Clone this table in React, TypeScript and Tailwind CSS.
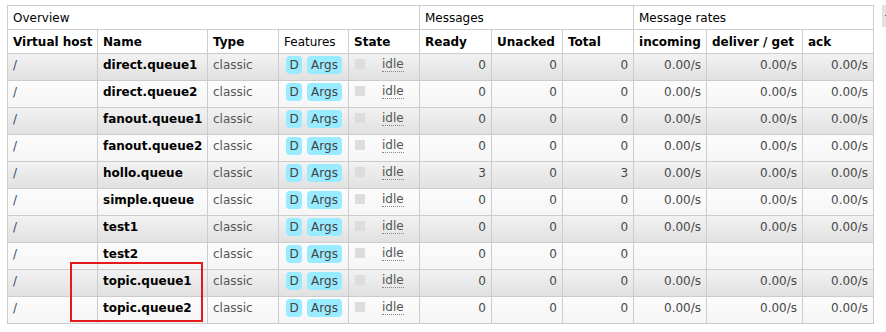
import React from 'react'

const queues = [
  { name: 'direct.queue1', ready: 0, unacked: 0, total: 0, rates: true },
  { name: 'direct.queue2', ready: 0, unacked: 0, total: 0, rates: true },
  { name: 'fanout.queue1', ready: 0, unacked: 0, total: 0, rates: true },
  { name: 'fanout.queue2', ready: 0, unacked: 0, total: 0, rates: true },
  { name: 'hollo.queue', ready: 3, unacked: 0, total: 3, rates: true },
  { name: 'simple.queue', ready: 0, unacked: 0, total: 0, rates: true },
  { name: 'test1', ready: 0, unacked: 0, total: 0, rates: true },
  { name: 'test2', ready: 0, unacked: 0, total: 0, rates: false },
  { name: 'topic.queue1', ready: 0, unacked: 0, total: 0, rates: true },
  { name: 'topic.queue2', ready: 0, unacked: 0, total: 0, rates: true },
]

const th =
  'border border-[#cccccc] px-[5px] text-left font-bold h-[24px] align-middle whitespace-nowrap overflow-hidden'
const td = 'border border-[#cccccc] px-[5px] pt-[3px] align-top h-[27px] whitespace-nowrap'
const num = `${td} text-right text-[#484848]`

function Badge({ children, w }: { children: React.ReactNode; w: string }) {
  return (
    <span
      className={`inline-flex items-center justify-center h-[18px] ${w} rounded-[4px] bg-[#99ebff] text-[#444] leading-[18px]`}
    >
      {children}
    </span>
  )
}

export default function App() {
  return (
    <div
      className="relative flex items-start pt-[5px] pl-[7px] bg-white text-[12px] leading-[16px] text-black overflow-hidden"
      style={{ fontFamily: '"DejaVu Sans", Verdana, sans-serif' }}
    >
      <table className="table-fixed border-collapse w-[866px] shrink-0">
        <colgroup>
          <col className="w-[90px]" />
          <col className="w-[110px]" />
          <col className="w-[71px]" />
          <col className="w-[70px]" />
          <col className="w-[71px]" />
          <col className="w-[72px]" />
          <col className="w-[71px]" />
          <col className="w-[71px]" />
          <col className="w-[73px]" />
          <col className="w-[96px]" />
          <col className="w-[71px]" />
        </colgroup>
        <thead>
          <tr>
            <th colSpan={5} className={`${th} font-normal`}>Overview</th>
            <th colSpan={3} className={`${th} font-normal`}>Messages</th>
            <th colSpan={3} className={`${th} font-normal`}>Message rates</th>
          </tr>
          <tr>
            <th className={th}>Virtual host</th>
            <th className={th}>Name</th>
            <th className={th}>Type</th>
            <th className={`${th} font-normal`}>Features</th>
            <th className={th}>State</th>
            <th className={th}>Ready</th>
            <th className={th}>Unacked</th>
            <th className={th}>Total</th>
            <th className={th}>incoming</th>
            <th className={th}>deliver / get</th>
            <th className={th}>ack</th>
          </tr>
        </thead>
        <tbody>
          {queues.map((q, i) => (
            <tr
              key={q.name}
              className={
                i % 2 === 0
                  ? 'bg-gradient-to-b from-[#f2f2f2] to-[#e0e0e0]'
                  : 'bg-gradient-to-b from-[#fcfcfc] to-[#f5f5f5]'
              }
            >
              <td className={`${td} text-[#3a4a6a]`}>/</td>
              <td className={`${td} font-bold`}>{q.name}</td>
              <td className={`${td} text-[#555]`}>classic</td>
              <td className="border border-[#cccccc] pl-[7px] pt-[2px] align-top h-[27px]">
                <div className="flex gap-[5px]">
                  <Badge w="w-[16px]">D</Badge>
                  <Badge w="w-[35px]">Args</Badge>
                </div>
              </td>
              <td className="border border-[#cccccc] pl-[6px] pt-[5px] align-top h-[27px]">
                <div className="flex items-start">
                  <span className="w-[10px] h-[10px] bg-[#dddddd] shrink-0" />
                  <span className="ml-[17px] -mt-[2px] text-[#555] border-b border-dotted border-[#888] leading-[14px]">
                    idle
                  </span>
                </div>
              </td>
              <td className={num}>{q.ready}</td>
              <td className={num}>{q.unacked}</td>
              <td className={num}>{q.total}</td>
              <td className={num}>{q.rates ? '0.00/s' : ''}</td>
              <td className={num}>{q.rates ? '0.00/s' : ''}</td>
              <td className={num}>{q.rates ? '0.00/s' : ''}</td>
            </tr>
          ))}
        </tbody>
      </table>
      <div className="ml-[8px] shrink-0 w-[22px] h-[22px] bg-[#e2e2e2] text-[#333] flex items-center pl-[2px]">
        +/-
      </div>
      <div className="absolute left-[70px] top-[262px] w-[133px] h-[60px] border-2 border-[#e3191b]" />
    </div>
  )
}
